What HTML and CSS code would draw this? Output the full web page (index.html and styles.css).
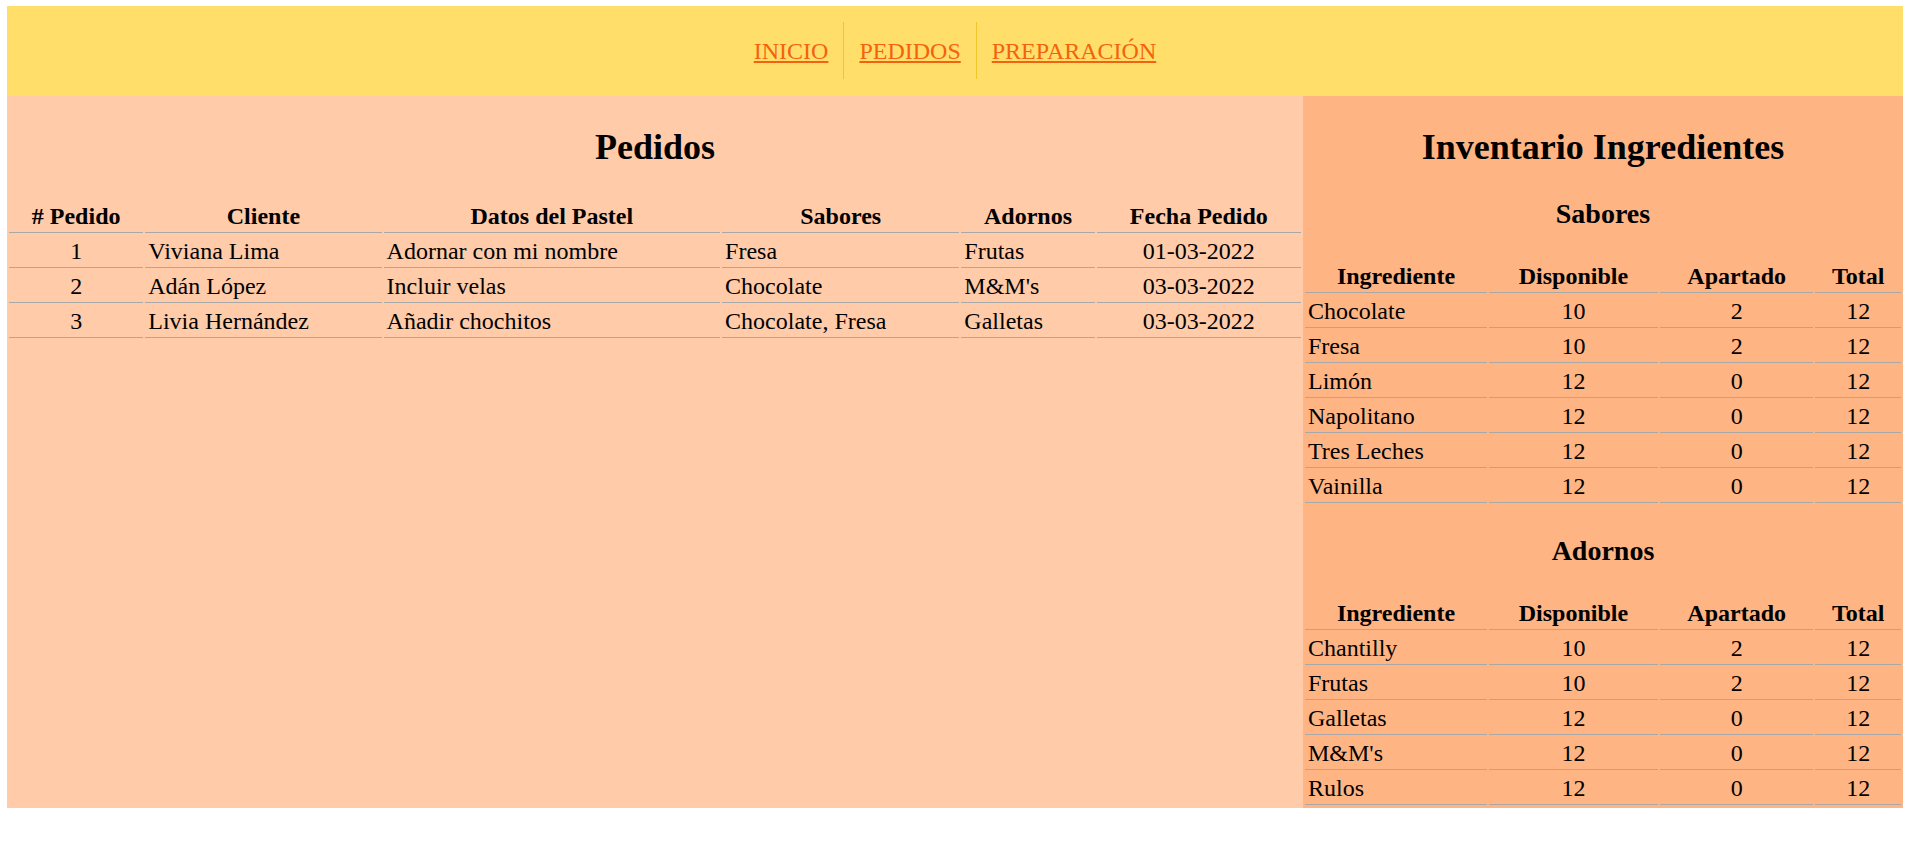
FILE: index.html
```html
<!DOCTYPE html>
<html lang="es">
<head>
<meta charset="utf-8">
<title>Pedidos</title>
<link rel="stylesheet" href="styles.css">
</head>
<body>
<header class="topbar">
  <nav>
    <ul class="nav">
      <li class="nav-item"><a class="nav-link" href="#">INICIO</a></li>
      <li class="nav-item"><a class="nav-link" href="#">PEDIDOS</a></li>
      <li class="nav-item"><a class="nav-link" href="#">PREPARACIÓN</a></li>
    </ul>
  </nav>
</header>
<main class="layout">
  <section class="orders">
    <h2 class="title">Pedidos</h2>
    <table class="grid-table">
      <thead>
        <tr><th># Pedido</th><th>Cliente</th><th>Datos del Pastel</th><th>Sabores</th><th>Adornos</th><th>Fecha Pedido</th></tr>
      </thead>
      <tbody>
        <tr><td class="c">1</td><td>Viviana Lima</td><td>Adornar con mi nombre</td><td>Fresa</td><td>Frutas</td><td class="c">01-03-2022</td></tr>
        <tr><td class="c">2</td><td>Adán López</td><td>Incluir velas</td><td>Chocolate</td><td>M&amp;M's</td><td class="c">03-03-2022</td></tr>
        <tr><td class="c">3</td><td>Livia Hernández</td><td>Añadir chochitos</td><td>Chocolate, Fresa</td><td>Galletas</td><td class="c">03-03-2022</td></tr>
      </tbody>
    </table>
  </section>
  <aside class="inventory">
    <h2 class="title">Inventario Ingredientes</h2>
    <h3 class="subtitle">Sabores</h3>
    <table class="grid-table">
      <thead>
        <tr><th>Ingrediente</th><th>Disponible</th><th>Apartado</th><th>Total</th></tr>
      </thead>
      <tbody>
        <tr><td>Chocolate</td><td class="c">10</td><td class="c">2</td><td class="c">12</td></tr>
        <tr><td>Fresa</td><td class="c">10</td><td class="c">2</td><td class="c">12</td></tr>
        <tr><td>Limón</td><td class="c">12</td><td class="c">0</td><td class="c">12</td></tr>
        <tr><td>Napolitano</td><td class="c">12</td><td class="c">0</td><td class="c">12</td></tr>
        <tr><td>Tres Leches</td><td class="c">12</td><td class="c">0</td><td class="c">12</td></tr>
        <tr><td>Vainilla</td><td class="c">12</td><td class="c">0</td><td class="c">12</td></tr>
      </tbody>
    </table>
    <h3 class="subtitle">Adornos</h3>
    <table class="grid-table">
      <thead>
        <tr><th>Ingrediente</th><th>Disponible</th><th>Apartado</th><th>Total</th></tr>
      </thead>
      <tbody>
        <tr><td>Chantilly</td><td class="c">10</td><td class="c">2</td><td class="c">12</td></tr>
        <tr><td>Frutas</td><td class="c">10</td><td class="c">2</td><td class="c">12</td></tr>
        <tr><td>Galletas</td><td class="c">12</td><td class="c">0</td><td class="c">12</td></tr>
        <tr><td>M&amp;M's</td><td class="c">12</td><td class="c">0</td><td class="c">12</td></tr>
        <tr><td>Rulos</td><td class="c">12</td><td class="c">0</td><td class="c">12</td></tr>
      </tbody>
    </table>
  </aside>
</main>
</body>
</html>
```
FILE: styles.css
```css
html, body {
  background: #ffffff;
}
body {
  margin: 6px 6px 0 7px;
  font-family: "Liberation Serif", "Times New Roman", serif;
  font-size: 24px;
  color: #000;
}
.topbar {
  background: #ffdf6a;
  padding: 16px 0 17px;
}
.nav {
  list-style: none;
  margin: 0;
  padding: 0;
  display: flex;
  justify-content: center;
}
.nav-item {
  height: 57px;
  padding: 1px 15px 0;
  box-sizing: border-box;
  display: flex;
  align-items: center;
  line-height: 27px;
}
.nav-item + .nav-item {
  border-left: 1px solid #f2c62a;
}
.nav-link {
  color: #f4620f;
  text-decoration: underline;
}
.layout {
  display: grid;
  grid-template-columns: 1fr 600px;
}
.orders {
  background: #ffcba9;
}
.inventory {
  background: #ffb484;
  padding-bottom: 1px;
}
.title {
  font-size: 36px;
  font-weight: bold;
  text-align: center;
  margin: 30px 0;
}
.subtitle {
  font-size: 28px;
  font-weight: bold;
  text-align: center;
  margin: 30px 0 28px;
}
.grid-table {
  width: 100%;
  border-collapse: separate;
  border-spacing: 2px;
}
.grid-table th,
.grid-table td {
  padding: 2px 3px;
  line-height: 28px;
  border-bottom: 1px solid #a8a8a8;
  text-align: left;
  white-space: nowrap;
}
.grid-table th {
  text-align: center;
  font-weight: bold;
}
.grid-table td.c {
  text-align: center;
}
```
